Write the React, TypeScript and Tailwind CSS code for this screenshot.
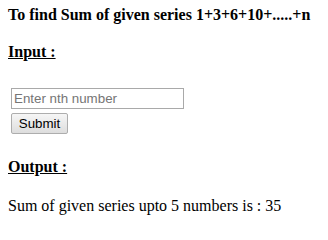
export default function App() {
  return (
    <div className="min-h-[225px] bg-white pl-2 pt-[6px] font-['Liberation_Serif',serif] text-[16px] leading-[18px] text-black">
      <div className="font-bold">To find Sum of given series 1+3+6+10+.....+n</div>

      <div className="mt-[19px] font-bold underline">Input :</div>

      <div className="mt-[27px] flex flex-col items-start pl-[3px]">
        <input
          type="text"
          placeholder="Enter nth number"
          className="h-[21px] w-[173px] border border-[#a9a9a9] px-[2px] font-['Liberation_Sans',Arial,sans-serif] text-[13.33px] text-black outline-none placeholder:text-[#757575]"
        />
        <button
          type="button"
          className="mt-[4px] h-[21px] w-[57px] rounded-[2px] border border-[#adadad] bg-[linear-gradient(#f6f6f6,#dddddd)] font-['Liberation_Sans',Arial,sans-serif] text-[13.33px] leading-[19px] text-black"
        >
          Submit
        </button>
      </div>

      <div className="mt-[24px] font-bold underline">Output :</div>

      <div className="mt-[21px]">Sum of given series upto 5 numbers is : 35</div>
    </div>
  );
}
